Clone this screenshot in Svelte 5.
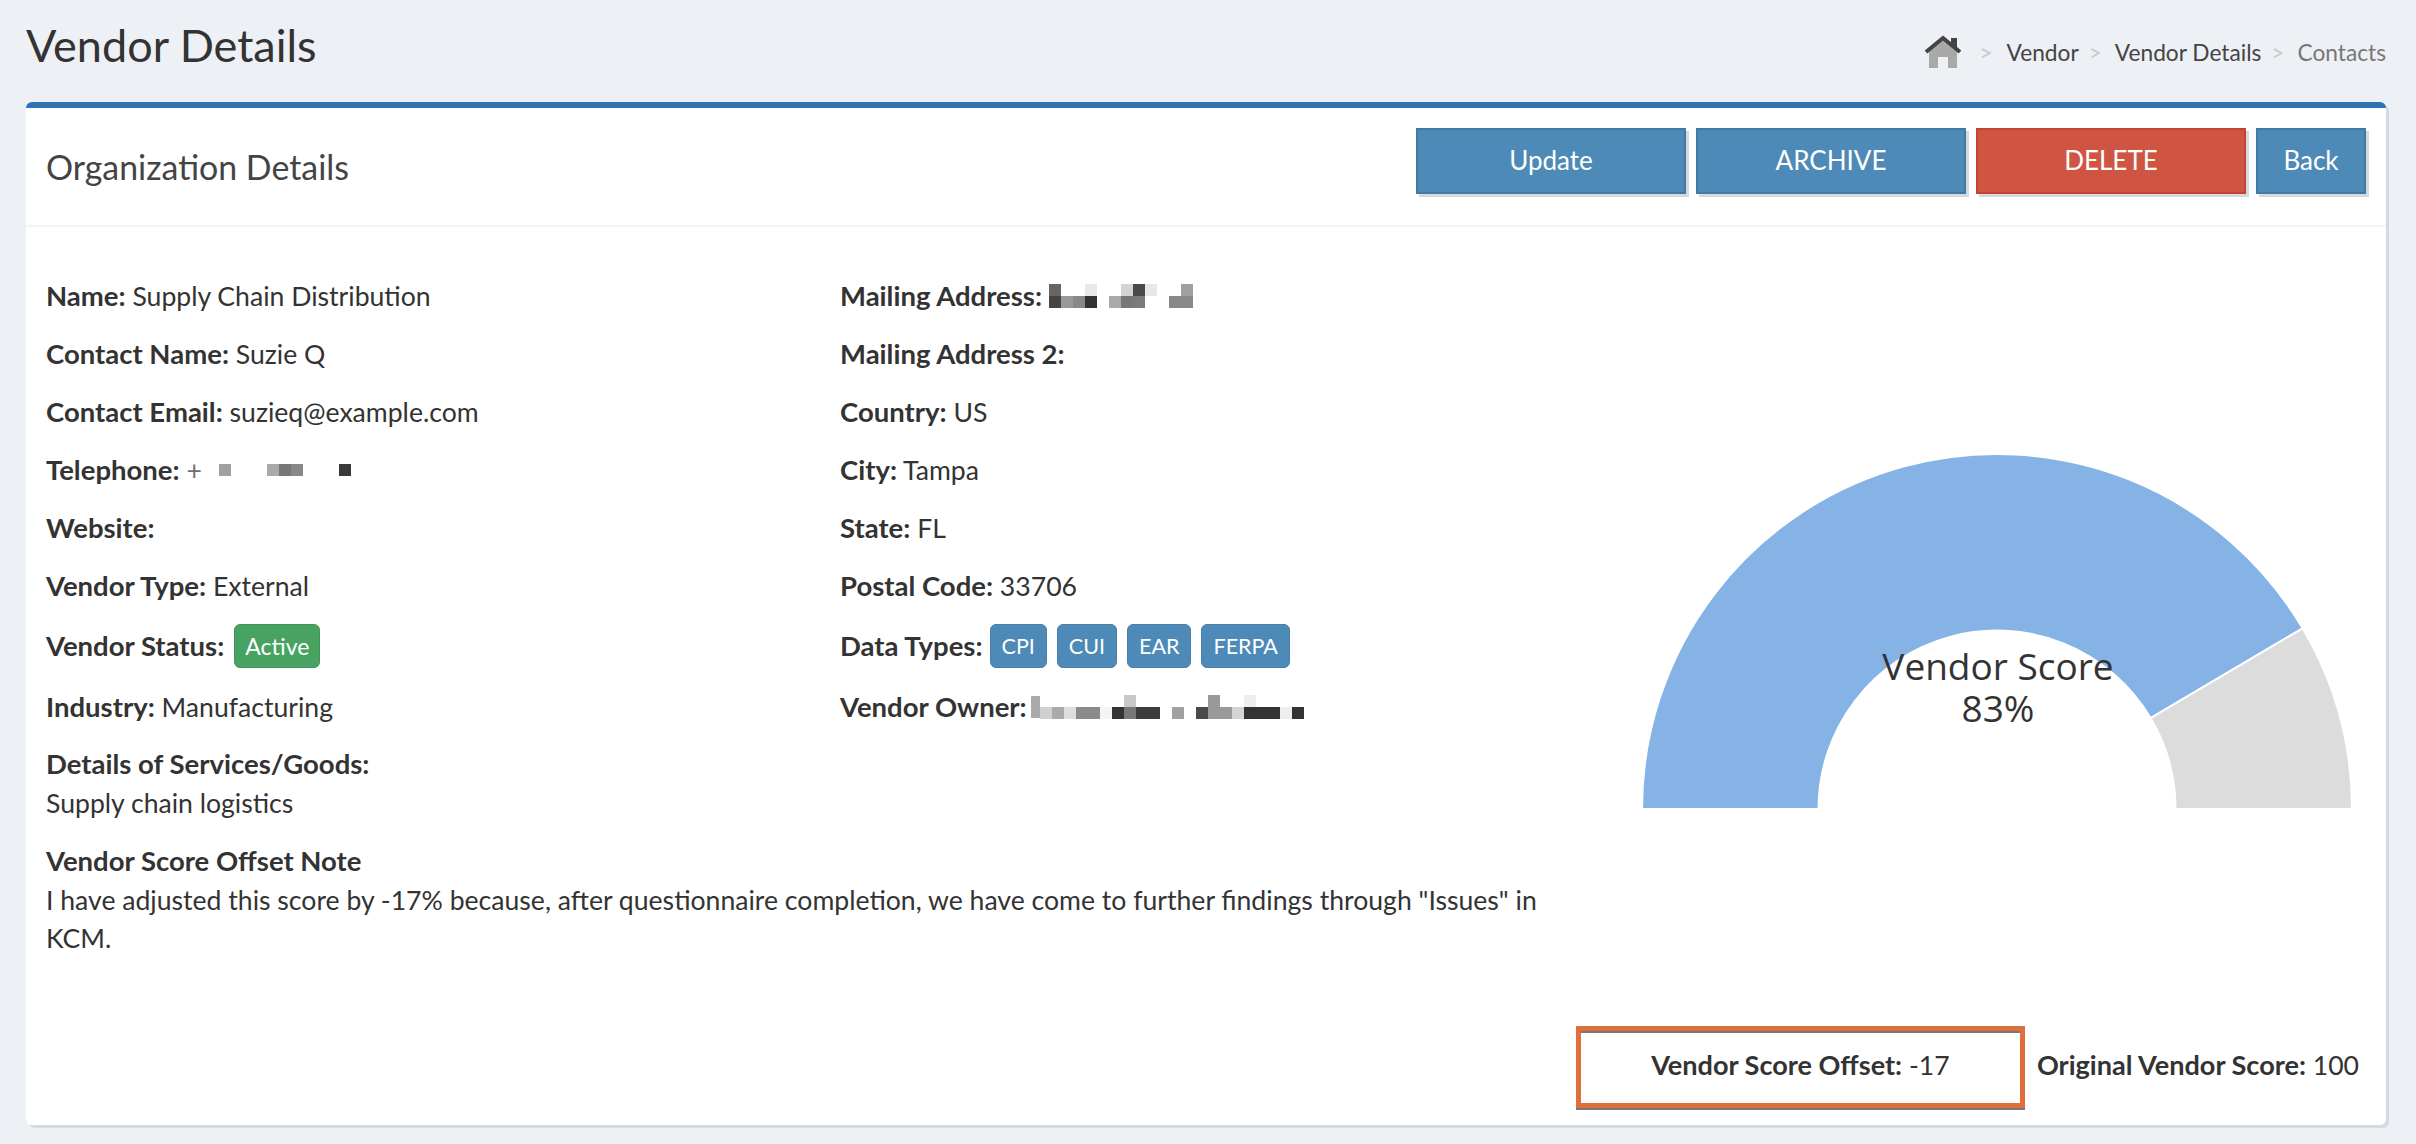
<script>
  const mailing = [
    ['#666', null, null, '#e8e8e8', null, null, '#d4d4d4', '#4a4a4a', '#e8e8e8', null, null, '#a0a0a0'],
    ['#444', '#999', '#888', '#333', null, '#aaa', '#777', '#7a7a7a', null, null, '#888', '#888']
  ];
  const phone = [
    [null, null, '#a0a0a0', null, null, null, '#aaa', '#777', '#888', null, null, null, '#3a3a3a']
  ];
  const owner = [
    [null, null, null, null, null, null, null, '#c8c8c8', null, null, null, null, null, null, '#999', null, null, '#eee', null, null, null, null],
    ['#d0d0d0', '#aaa', '#ddd', '#8a8a8a', '#8a8a8a', '#f4f4f4', '#333', '#777', '#3c3c3c', '#3c3c3c', null, '#a0a0a0', null, '#4a4a4a', '#999', '#999', '#d4d4d4', '#333', '#333', '#333', '#eee', '#333']
  ];
  const dataTypes = ['CPI', 'CUI', 'EAR', 'FERPA'];
</script>

{#snippet mosaic(rows)}
  <span class="mosaic">
    {#each rows as row}
      <span class="mosaic-row">
        {#each row as shade}
          <span class="cell" style:background={shade ?? 'transparent'}></span>
        {/each}
      </span>
    {/each}
  </span>
{/snippet}

<div class="page">
  <header class="top">
    <h1>Vendor Details</h1>
    <nav class="crumbs">
      <svg class="home" width="38" height="34" viewBox="0 0 38 34">
        <path d="M5 15 L19 3 L33 15 V33 H24 V22 H14 V33 H5 Z" fill="#a9a9a9" />
        <path d="M2 17 L19 3 L36 17" fill="none" stroke="#444" stroke-width="4" />
        <path d="M27 3 H33 V13 L27 8 Z" fill="#444" />
      </svg>
      <span class="sep">&gt;</span>
      <span>Vendor</span>
      <span class="sep">&gt;</span>
      <span>Vendor Details</span>
      <span class="sep">&gt;</span>
      <span class="current">Contacts</span>
    </nav>
  </header>

  <section class="card">
    <div class="card-head">
      <h2>Organization Details</h2>
      <div class="actions">
        <button class="btn wide">Update</button>
        <button class="btn wide">ARCHIVE</button>
        <button class="btn wide danger">DELETE</button>
        <button class="btn">Back</button>
      </div>
    </div>

    <div class="card-body">
      <div class="info">
        <div class="columns">
          <div class="col">
            <p><b>Name:</b> Supply Chain Distribution</p>
            <p><b>Contact Name:</b> Suzie Q</p>
            <p><b>Contact Email:</b> suzieq@example.com</p>
            <p class="inline"><b>Telephone:</b> <span class="plus">+</span>{@render mosaic(phone)}</p>
            <p><b>Website:</b></p>
            <p><b>Vendor Type:</b> External</p>
            <p class="badge-row"><b>Vendor Status:</b> <span class="badge green">Active</span></p>
            <p><b>Industry:</b> Manufacturing</p>
            <div class="block">
              <b>Details of Services/Goods:</b>
              <div>Supply chain logistics</div>
            </div>
          </div>
          <div class="col">
            <p class="inline"><b>Mailing Address:</b> {@render mosaic(mailing)}</p>
            <p><b>Mailing Address 2:</b></p>
            <p><b>Country:</b> US</p>
            <p><b>City:</b> Tampa</p>
            <p><b>State:</b> FL</p>
            <p><b>Postal Code:</b> 33706</p>
            <p class="badge-row types">
              <b>Data Types:</b>
              {#each dataTypes as t}<span class="badge">{t}</span>{/each}
            </p>
            <p class="inline"><b>Vendor Owner:</b> <span class="edge"></span>{@render mosaic(owner)}</p>
          </div>
        </div>
        <div class="block note">
          <b>Vendor Score Offset Note</b>
          <div>I have adjusted this score by -17% because, after questionnaire completion, we have come to further findings through "Issues" in KCM.</div>
        </div>
      </div>

      <div class="gauge">
        <svg width="720" height="360" viewBox="0 0 720 360">
          <path d="M1 357 A355 355 0 0 1 661.6 176.3 L509.6 266.1 A178.5 178.5 0 0 0 177.5 357 Z" fill="#85b3e6" stroke="#fff" stroke-width="2" />
          <path d="M661.6 176.3 A355 355 0 0 1 711 357 H534.5 A178.5 178.5 0 0 0 509.6 266.1 Z" fill="#dcdcdc" stroke="#fff" stroke-width="2" />
          <text x="357" y="228" text-anchor="middle">Vendor Score</text>
          <text x="357" y="270" text-anchor="middle">83%</text>
        </svg>
      </div>
    </div>

    <div class="card-foot">
      <div class="offset"><span><b>Vendor Score Offset:</b> -17</span></div>
      <div class="original"><b>Original Vendor Score:</b> 100</div>
    </div>
  </section>
</div>

<style>
  :global(body) {
    margin: 0;
    background: #edf0f5;
    font-family: Lato, "Liberation Sans", sans-serif;
    color: #333;
  }

  .page {
    padding: 0 30px 18px 26px;
  }

  .top {
    height: 102px;
    display: flex;
    justify-content: space-between;
    align-items: flex-start;
  }

  h1 {
    margin: 17px 0 0 0;
    font-size: 45px;
    font-weight: 400;
    line-height: 56px;
    color: #333;
  }

  .crumbs {
    display: flex;
    align-items: center;
    height: 34px;
    margin-top: 35px;
    font-size: 22.7px;
    color: #444;
  }

  .home {
    margin-right: 17px;
  }

  .sep {
    color: #c8c8c8;
    margin: 0 13px 0 10px;
  }

  .home + .sep {
    margin-left: 0;
    margin-right: 14px;
  }

  .current {
    color: #777;
  }

  .card {
    background: #fff;
    border-top: 6px solid #2e74b5;
    border-radius: 6px;
    box-shadow: 3px 3px 0 #d5d9e3;
  }

  .card-head {
    height: 119px;
    box-sizing: border-box;
    border-bottom: 2px solid #f4f4f4;
    display: flex;
    justify-content: space-between;
    padding: 20px 20px 0 20px;
  }

  h2 {
    margin: 16px 0 0 0;
    font-size: 33.9px;
    line-height: 46px;
    font-weight: 400;
    color: #444;
  }

  .actions {
    display: flex;
    gap: 10px;
  }

  .btn {
    width: 110px;
    height: 66px;
    box-sizing: border-box;
    background: #4d8ab7;
    border: 2px solid #44799f;
    box-shadow: 3px 3px 0 #d5d9e3;
    color: #fff;
    font: inherit;
    font-size: 26px;
    padding: 0 0 3px 0;
  }

  .btn.wide {
    width: 270px;
  }

  .btn.danger {
    background: #cf5542;
    border-color: #c2432f;
  }

  .card-body {
    display: grid;
    grid-template-columns: 1560px 1fr;
    padding: 49px 0 0 20px;
    font-size: 26.6px;
    line-height: 40px;
    height: 799px;
    box-sizing: border-box;
  }

  .columns {
    display: grid;
    grid-template-columns: 794px 1fr;
  }

  .col p {
    margin: 0 0 18px 0;
    height: 40px;
    white-space: nowrap;
  }

  .col p.badge-row {
    height: 44px;
    margin: 0 0 19px 0;
    display: flex;
    align-items: center;
    gap: 10px;
  }

  .col p.inline {
    display: flex;
    align-items: center;
    gap: 7px;
  }

  .types b {
    margin-right: -3px;
  }

  b {
    font-weight: 700;
    font-size: 27.5px;
  }

  .plus {
    opacity: 0.7;
    margin-right: -14px;
  }

  .edge {
    width: 9px;
    height: 22px;
    align-self: center;
    background: #aaa;
    margin: 0 -7px 0 -3px;
  }

  .mosaic {
    display: inline-flex;
    flex-direction: column;
  }

  .mosaic-row {
    display: flex;
    height: 12px;
  }

  .cell {
    width: 12px;
    height: 12px;
  }

  .badge {
    box-sizing: border-box;
    height: 44px;
    padding: 0 11px;
    background: #4d8ab7;
    border: 1px solid #4a7fa8;
    border-radius: 6px;
    color: #fff;
    font-size: 21.5px;
    line-height: 42px;
  }

  .badge.green {
    background: #48a362;
    border-color: #429558;
    font-size: 23px;
    padding: 0 10px;
  }

  .block {
    margin-bottom: 20px;
    line-height: 38.5px;
  }

  .note {
    width: 1510px;
  }

  .gauge {
    padding: 176px 0 0 35px;
  }

  .gauge text {
    font-family: "Open Sans", sans-serif;
    font-size: 37px;
    fill: #333;
  }

  .card-foot {
    display: flex;
    justify-content: flex-end;
    align-items: center;
    gap: 12px;
    padding: 0 27px 17px 0;
    font-size: 26.6px;
    line-height: 40px;
  }

  .card-foot b {
    font-size: 27.1px;
  }

  .original {
    padding-bottom: 4px;
  }

  .offset {
    width: 449px;
    height: 82px;
    box-sizing: border-box;
    border: 5px solid #e0703b;
    padding-bottom: 4px;
    box-shadow: inset 0 2px 0 #777, 0 2px 0 #777;
    display: flex;
    align-items: center;
    justify-content: center;
  }
</style>
